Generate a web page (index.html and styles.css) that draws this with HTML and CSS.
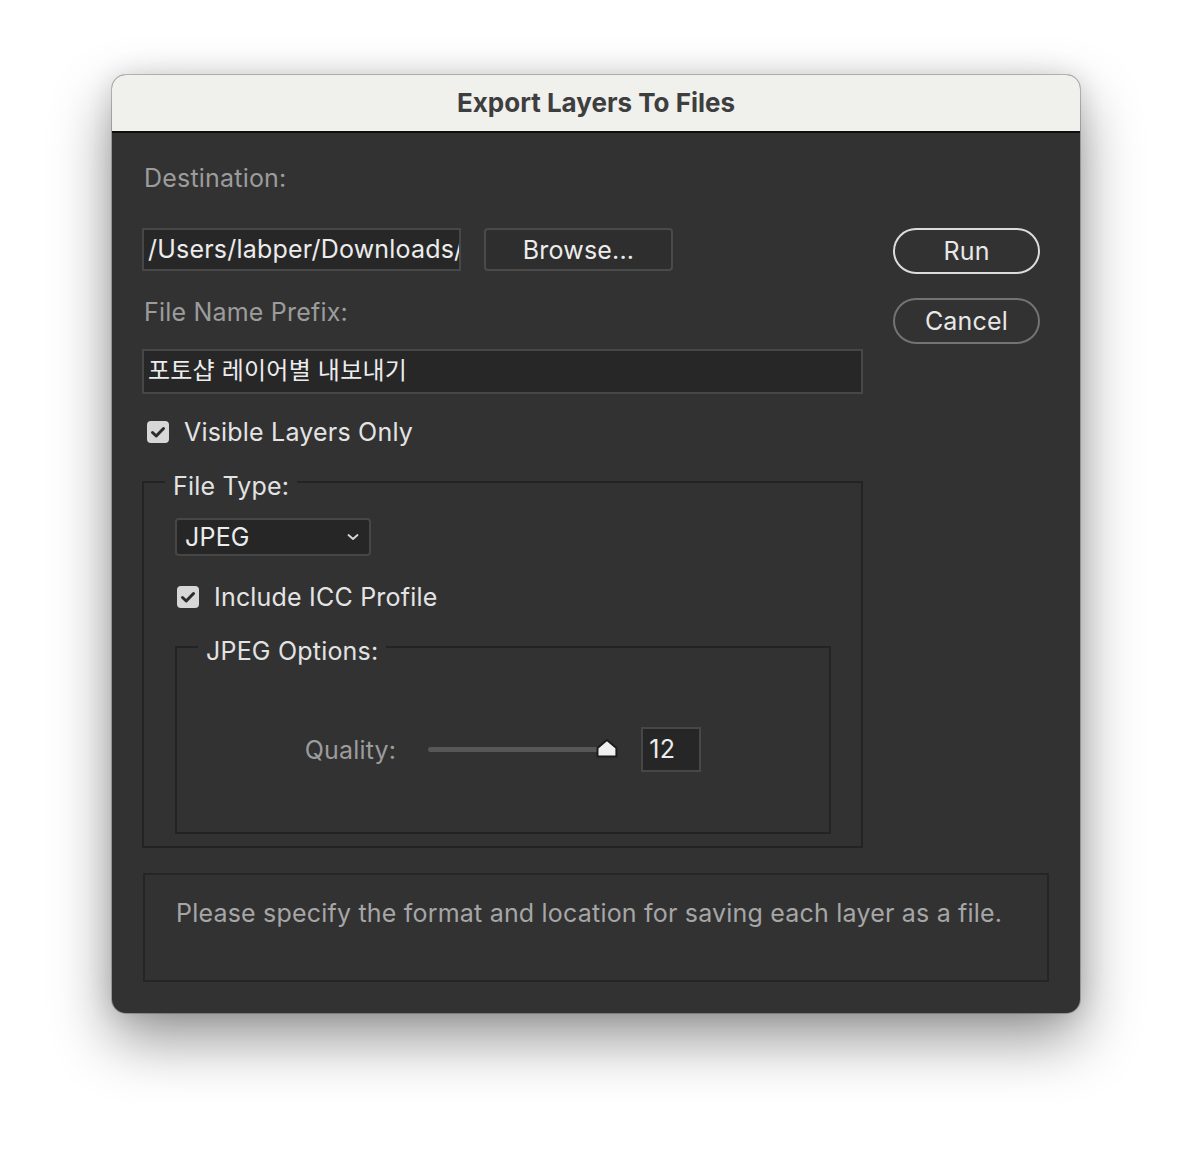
FILE: index.html
```html
<!DOCTYPE html>
<html lang="en">
<head>
  <meta charset="UTF-8">
  <title>Export Layers To Files</title>
  <link rel="stylesheet" href="styles.css">
</head>
<body>
  <div class="window">
    <div class="titlebar">Export Layers To Files</div>

    <div class="content">
      <div class="main">
        <div class="label dest-label">Destination:</div>
        <div class="dest-row">
          <div class="field path-field">/Users/labper/Downloads/</div>
          <button class="btn-rect">Browse...</button>
        </div>

        <div class="label prefix-label">File Name Prefix:</div>
        <div class="field prefix-field">포토샵 레이어별 내보내기</div>

        <div class="check-row visible-row">
          <span class="checkbox">
            <svg width="22" height="22" viewBox="0 0 22 22"><path d="M5.5 11.5 L9.2 15 L16.5 7.5" fill="none" stroke="#2b2b2b" stroke-width="3" stroke-linecap="round" stroke-linejoin="round"/></svg>
          </span>
          <span class="check-text">Visible Layers Only</span>
        </div>

        <fieldset class="group file-type">
          <legend>File Type:</legend>
          <div class="select">
            <span>JPEG</span>
            <svg width="14" height="10" viewBox="0 0 14 10"><polyline points="2.5,3 7,7 11.5,3" fill="none" stroke="#d8d8d8" stroke-width="1.8" stroke-linecap="round" stroke-linejoin="round"/></svg>
          </div>

          <div class="check-row icc-row">
            <span class="checkbox">
              <svg width="22" height="22" viewBox="0 0 22 22"><path d="M5.5 11.5 L9.2 15 L16.5 7.5" fill="none" stroke="#2b2b2b" stroke-width="3" stroke-linecap="round" stroke-linejoin="round"/></svg>
            </span>
            <span class="check-text">Include ICC Profile</span>
          </div>

          <fieldset class="group jpeg-options">
            <legend>JPEG Options:</legend>
            <div class="quality-row">
              <span class="label quality-label">Quality:</span>
              <div class="slider">
                <div class="track"></div>
                <svg class="thumb" width="22" height="20" viewBox="0 0 22 20"><path d="M1.5 18.5 L1.5 10 L11 2 L20.5 10 L20.5 18.5 Z" fill="#f0f0f0" stroke="#1c1c1c" stroke-width="2" stroke-linejoin="round"/></svg>
              </div>
              <div class="field quality-field">12</div>
            </div>
          </fieldset>
        </fieldset>
      </div>

      <div class="side">
        <button class="btn-pill run">Run</button>
        <button class="btn-pill cancel">Cancel</button>
      </div>
    </div>

    <div class="message">Please specify the format and location for saving each layer as a file.</div>
  </div>
</body>
</html>
```

FILE: styles.css
```css
/* Photoshop style export dialog */
body {
  margin: 0;
  padding: 75px 0 149px 0;
  background-color: #ffffff;
  font-family: Inter, "Noto Sans CJK KR", sans-serif;
  letter-spacing: 0.2px;
}

.window {
  width: 968px;
  height: 938px;
  margin-left: 112px;
  background-color: #323232;
  border-radius: 14px;
  overflow: hidden;
  box-shadow: 0 0 0 1px rgba(0, 0, 0, 0.22), 0 26px 60px rgba(0, 0, 0, 0.42), 0 0 26px rgba(0, 0, 0, 0.12);
}

.titlebar {
  height: 56px;
  line-height: 56px;
  background-color: #f0f0ed;
  border-bottom: 2px solid #0e0e0e;
  text-align: center;
  font-size: 26px;
  font-weight: 700;
  color: #3e3e3e;
  letter-spacing: 0;
}

.content {
  display: grid;
  grid-template-columns: 721px 147px;
  column-gap: 30px;
  padding: 31px 0 0 30px;
}

.label {
  font-size: 25px;
  line-height: 28px;
  color: #9c9c9c;
}

.dest-label {
  padding-left: 2px;
}

.dest-row {
  display: flex;
  gap: 23px;
  margin-top: 36px;
}

.field {
  box-sizing: border-box;
  background-color: #272727;
  border: 2px solid #474747;
  color: #ececec;
  font-size: 25px;
  white-space: nowrap;
  overflow: hidden;
}

.path-field {
  width: 319px;
  height: 43px;
  line-height: 38px;
  padding-left: 4px;
}

.btn-rect {
  width: 189px;
  height: 43px;
  background-color: #2e2e2e;
  border: 2px solid #4a4a4a;
  border-radius: 4px;
  color: #ececec;
  font-family: inherit;
  font-size: 25px;
  letter-spacing: 0.2px;
  padding: 0;
}

.prefix-label {
  margin-top: 27px;
  padding-left: 2px;
}

.prefix-field {
  width: 721px;
  height: 45px;
  line-height: 40px;
  margin-top: 23px;
  padding-left: 4px;
  font-size: 24px;
}

.check-row {
  display: flex;
  align-items: center;
  height: 28px;
}

.visible-row {
  margin-top: 24px;
  padding-left: 5px;
}

.checkbox {
  width: 22px;
  height: 22px;
  border-radius: 4px;
  background-color: #d7d7d7;
  display: inline-flex;
}

.check-text {
  margin-left: 15px;
  font-size: 25px;
  color: #e4e4e4;
}

.group {
  margin: 0;
  border: 2px solid #232323;
  min-width: 0;
}

.group legend {
  font-size: 25px;
  line-height: 28px;
  color: #e2e2e2;
  padding: 8px 8px 0 8px;
  margin-left: -10px;
}

.file-type {
  margin-top: 18px;
  padding: 18px 30px 12px 31px;
}

.select {
  box-sizing: border-box;
  width: 196px;
  height: 38px;
  display: flex;
  align-items: center;
  justify-content: space-between;
  padding: 0 9px 0 8px;
  background-color: #262626;
  border: 2px solid #474747;
  border-radius: 4px;
  font-size: 25px;
  color: #ececec;
}

.icc-row {
  margin-top: 27px;
  padding-left: 2px;
}

.jpeg-options {
  margin-top: 18px;
  height: 205px;
  box-sizing: border-box;
  padding: 0 0 0 31px;
}

.quality-row {
  display: flex;
  align-items: center;
  justify-content: center;
  margin-top: 62px;
  margin-left: -31px;
}

.quality-label {
  margin-right: 32px;
}

.slider {
  display: flex;
  align-items: center;
  width: 190px;
}

.track {
  width: 172px;
  height: 5px;
  border-radius: 3px;
  background-color: #575757;
}

.thumb {
  margin-left: -3px;
  margin-top: -3px;
}

.quality-field {
  width: 60px;
  height: 45px;
  line-height: 40px;
  margin-left: 23px;
  padding-left: 6px;
  background-color: #262626;
}

.side {
  display: flex;
  flex-direction: column;
  gap: 24px;
  padding-top: 64px;
}

.btn-pill {
  width: 147px;
  height: 46px;
  border-radius: 23px;
  background-color: transparent;
  color: #e8e8e8;
  font-family: inherit;
  font-size: 25px;
  letter-spacing: 0.2px;
  padding: 0;
}

.btn-pill.run {
  border: 2px solid #dcdcdc;
}

.btn-pill.cancel {
  border: 2px solid #737373;
}

.message {
  box-sizing: border-box;
  width: 906px;
  height: 109px;
  margin: 25px 0 0 31px;
  padding: 24px 31px 0 31px;
  border: 2px solid #252525;
  font-size: 25px;
  line-height: 28px;
  color: #a6a6a6;
}
```
